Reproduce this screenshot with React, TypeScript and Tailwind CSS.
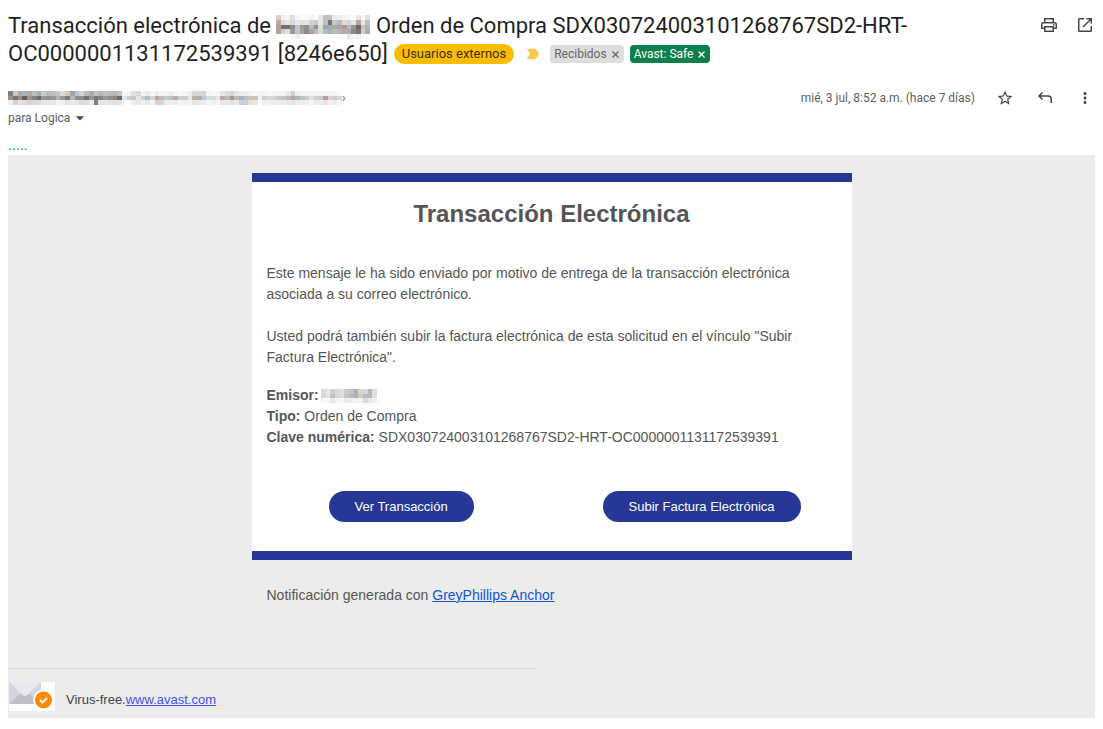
import type { ReactNode } from "react";
import {
  MdMoreVert,
  MdStarBorder,
  MdLabelImportant,
  MdArrowDropDown,
} from "react-icons/md";

// Censored names are stored as rows of coloured cells
const subjectCells = [
  "d8d0c8 f0f0f0 eef4fa dbe2ea f5f5f5 fafafa f8f8f8 f4f4f4 fffdf0 e8e8ec cbbdb5 b9c4c4 e8ecee e8f0f8 f4f4f4 f4f4f4 ffffff e8e4e8 fffce8 dce2ec",
  "b8aca0 dcdcdc e4e4e8 d8d8d8 dfe9f3 e6e0d8 e4e4e4 d4d0cc c4ccd4 e8e8e4 b8c0c4 6f7474 c8c8c0 b4bcc8 e4d8d0 d0d4dc e8e4e4 b0a8a8 e8e8d8 b8c0cc",
  "b4a498 75706c 74706c 8c8c90 bcc4cc a49890 8c9094 c4b8b0 8c94a0 d4e0d0 98a4b0 a0acb0 9cb0a8 a8a4ac b4988c b0b8c4 9c9490 706464 c8c8b8 a8b4c4",
  "b4a498 d0d0d0 e0dcd8 9c9894 c0c4cc a8a4a0 8c8c8c a8a4a0 b4bcc4 d0e0d0 b0bcc4 a8b0b0 b4c0b8 b8b4b8 c0a898 a8acb8 8c8888 807480 dccec4 a4b0c0",
  "ffffff ffffff ffffff f8f8f8 eeeeee f8f8f8 ffffff ffffff ffffff ffffff ffffff ffffff ffffff ffffff ffffff e8e8e8 f4f4f4 f0f0f4 ffffff ffffff",
];

const senderCells = [
  "8a7c70 c0c8cc b0a8a4 a8b4bc b8a898 b8c0bc a8b0b4 c8ccc8 b8bcbc bcc0bc c8c8c8 dcdcdc d8c8bc a0a4a8 b8c4d0 d4d4d0 c0bcb8 a8b0b0 c8c0bc b4b8bc c4bcc0 b8bcbc bcb4b0 c0c4c8",
  "a09084 7c706c 94908c 705c5c a09484 7c8488 6c6c70 94989c 8c908c 989894 b0b4b4 989898 7c7c7c b4b8b8 948c88 8c8c90 6c7480 8c9894 7c7474 888484 a0988c 8c8c94 948478 6c6c70",
  "f0f0f4 d8d0cc e4e0e0 e0dcdc d0d4dc d8dce0 dcdce0 e4e8e4 e8e8e8 e4e8e8 f4f4f4 eeeeee e4e4e4 e8eaf0 e8e4e0 d8dce4 dce0e4 e8ece8 807c88 e8e4e4 e8e4e8 e4e4e8 e0dce0 e4e4e4",
];

const addressCells = [
  "f4fafe f4f4f4 e4e0e0 d8d8d8 f4f4f4 e8ecec f4f4f4 f0e8e4 f4f4f4 f0f4f8 ececec f4f4f4 f8f8f8 f4f4f4 eceedc d0d8e0 dcd4d0 d4d8d8 f4f4f4 f8f8f8 f4f4f4 e4e4e8 d8dcdc d8d4d4 e8e4e0 e8ecf0 f0ece8 f4f4f4 f8f8f8 f4f4f4 f4f4f4 f8f8f8 f4f4f4 f4f4f4 f4f4f4 e8e8ec d8ccc8 f0f0f0 f4f4f4 f4f4f4 f4f4f4 f4f4f4 f4f4f4 f4f4f4 f4f4f4 f4f4f4 fafafa",
  "d8e8f8 d0cccc c8c8cc e8e4e8 ccd0d4 b4c0bc d4d4d8 c4a498 c4bcb4 b8ccd8 d4bca8 a8b4bc d0d0d4 ccccd0 e8eadc b8b0ac b4acb0 c4c8d0 d0dce4 d4dcd8 e8e8ec b4acac c4b8b4 a89890 c0b8b4 b0b0b8 b0c4d4 d4c4ac c4c4c8 f0f4f8 d0d0d4 d8d8dc d4d4d4 c8c8cc c4c4c8 b8bcc0 b8a8a0 a8b8c0 b8c4c8 c8ccd0 f0dccc ccd0d4 c8ccd0 b8a098 d4d4d8 c8d0d4 d8d8dc",
  "fafafa f8f8f8 ececec e8e8e8 f0f0f0 e8e8e8 f4f4f4 d8d0d4 c8d8e0 e8ecf4 f0f0f4 ececec f4f4f4 f0f0f0 f4f4e8 e4e4e8 e8e8e8 e8ecf0 f4f4f8 f0f0f0 f4f4f4 e8e8e8 e8e8ec e4e0e0 e8e8e8 c8d0dc c4d0e0 ecdccc e8e8e8 fafafa f0f0f0 f0f0f0 ececec ececec ececec e8e8ec e4e4e4 e8ecf0 ececec f0f0f0 f4f4f0 ececec ececec e8e4e4 f0f0f0 ececec f8f8f8",
];

const issuerCells = [
  "dcdcd8 f0e8dc c8d0d8 d8dcdc e0e0e4 d0ccc4 c8c0b8 a8b0b8 d4d4d8 d8d4dc b8b8b8 dce0d8",
  "d8d4d0 ece4d8 b8c4cc d0d8d8 dcdce0 c4c4c0 c0b8b0 a8b4bc d8c8c4 b8b8cc b4bab4 dce2d8",
  "f8f8f8 fcfaf8 e8e8f0 f4f4f4 f8f8f8 ececec f0f0f0 f0f0f4 f8f0f0 d8d8e4 e8e8ec f0f4f0",
];

function Mosaic({ rows, className }: { rows: string[]; className: string }) {
  const cells = rows.map((r) => r.split(" "));

  return (
    <svg
      className={className}
      viewBox={`0 0 ${cells[0].length} ${cells.length}`}
      preserveAspectRatio="none"
      shapeRendering="crispEdges"
      aria-hidden="true"
    >
      {cells.map((row, y) =>
        row.map((c, x) => (
          <rect key={`${x}-${y}`} x={x} y={y} width="1" height="1" fill={`#${c}`} />
        ))
      )}
    </svg>
  );
}

function IconButton({ label, children }: { label: string; children: ReactNode }) {
  return (
    <button
      aria-label={label}
      className="flex h-5 w-5 cursor-pointer items-center justify-center text-[#444746]"
    >
      {children}
    </button>
  );
}

// 20px outline icons, 1.5px strokes
function LineIcon({ children }: { children: ReactNode }) {
  return (
    <svg
      width="20"
      height="20"
      viewBox="0 0 20 20"
      fill="none"
      stroke="currentColor"
      strokeWidth="1.500"
    >
      {children}
    </svg>
  );
}

function PrintIcon() {
  return (
    <LineIcon>
      <path d="M5.750 7V3.750h8.500V7" />
      <path d="M5.500 13.250H2.750V9.250q0-1.500 1.500-1.500h11.500q1.500 0 1.500 1.500v4H14.500" />
      <path d="M5.750 11.750h8.500v4.500h-8.500z" />
      <path d="M14 9.750h1.500" />
    </LineIcon>
  );
}

function NewWindowIcon() {
  return (
    <LineIcon>
      <path d="M9 3.750H4.500q-.75 0-.75.75v11q0 .75.75.75h11q.75 0 .75-.75V11" />
      <path d="M11.500 3.750h4.750V8.500M16 4L8 12" />
    </LineIcon>
  );
}

function ReplyIcon() {
  return (
    <LineIcon>
      <path d="M7.500 4.500L4 8l3.500 3.500M4 8h9q3.250 0 3.250 3.250V15" />
    </LineIcon>
  );
}

function Tag({ name, className }: { name: string; className: string }) {
  return (
    <span className={`flex h-[18px] items-center gap-1 rounded px-1 ${className}`}>
      {name}
      <button aria-label={`Quitar ${name}`} className="cursor-pointer">
        <svg width="9" height="9" viewBox="0 0 9 9" stroke="currentColor" strokeWidth="1.300">
          <path d="M1.500 1.500l6 6M7.500 1.500l-6 6" />
        </svg>
      </button>
    </span>
  );
}

function Subject() {
  return (
    <div className="flex items-start justify-between">
      <div className="max-w-[920px] text-[22px] leading-7 text-[#1f1f1f]">
        <h1 className="inline">
          Transacción electrónica de{" "}
          <Mosaic rows={subjectCells} className="inline-block h-6 w-[94px] align-middle" />{" "}
          Orden de Compra SDX030724003101268767SD2-HRT-OC0000001131172539391 [8246e650]
        </h1>
        <div className="ml-1.5 inline-flex h-7 items-center align-bottom text-xs">
          <span className="flex h-5 items-center rounded-full bg-[#fbbc04] px-2 text-[13px] text-[#3c3000]">
            Usuarios externos
          </span>
          <MdLabelImportant className="ml-2.5 h-[18px] w-[18px] text-[#f7cb4d]" />
          <Tag className="ml-2 bg-[#ddd] text-[#666]" name="Recibidos" />
          <Tag className="ml-1.5 bg-[#0b804b] text-white" name="Avast: Safe" />
        </div>
      </div>
      <div className="flex gap-4 pt-[3px]">
        <IconButton label="Imprimir todo">
          <PrintIcon />
        </IconButton>
        <IconButton label="En ventana nueva">
          <NewWindowIcon />
        </IconButton>
      </div>
    </div>
  );
}

function Sender() {
  return (
    <div className="mt-5 flex items-start justify-between text-xs leading-5 text-[#5e5e5e]">
      <div>
        <div className="flex h-5 items-center">
          <Mosaic rows={senderCells} className="h-3.5 w-[114px]" />
          <Mosaic rows={addressCells} className="h-3.5 w-[220px]" />
          <span>›</span>
        </div>
        <button className="flex cursor-pointer items-center">
          para Logica <MdArrowDropDown size={20} className="text-[#444746]" />
        </button>
      </div>
      <div className="flex items-center gap-5">
        <span>mié, 3 jul, 8:52 a.m. (hace 7 días)</span>
        <IconButton label="Destacar">
          <MdStarBorder size={18} />
        </IconButton>
        <IconButton label="Responder">
          <ReplyIcon />
        </IconButton>
        <IconButton label="Más">
          <MdMoreVert size={18} />
        </IconButton>
      </div>
    </div>
  );
}

function PillButton({ children }: { children: ReactNode }) {
  return (
    <button className="h-[31px] cursor-pointer rounded-full bg-[#263796] px-[26px] text-[13px] text-white">
      {children}
    </button>
  );
}

function Card() {
  return (
    <div className="mx-auto w-full max-w-[600px]">
      <div className="border-y-[9px] border-[#263796] bg-white px-[15px] pt-4 pb-[29px]">
        <h2 className="text-center text-2xl font-bold">Transacción Electrónica</h2>
        <p className="mt-[33px]">
          Este mensaje le ha sido enviado por motivo de entrega de la transacción
          electrónica asociada a su correo electrónico.
        </p>
        <p className="mt-[21px]">
          Usted podrá también subir la factura electrónica de esta solicitud en el
          vínculo "Subir Factura Electrónica".
        </p>
        <div className="mt-[17px]">
          <div className="flex items-center">
            <b>Emisor:</b>
            <Mosaic rows={issuerCells} className="ml-0.5 h-3.5 w-14" />
          </div>
          <div>
            <b>Tipo:</b> Orden de Compra
          </div>
          <div>
            <b>Clave numérica:</b> SDX030724003101268767SD2-HRT-OC0000001131172539391
          </div>
        </div>
        <div className="mt-[43px] flex justify-between pr-9 pl-[62px]">
          <PillButton>Ver Transacción</PillButton>
          <PillButton>Subir Factura Electrónica</PillButton>
        </div>
      </div>
      <p className="mt-[25px] px-[15px]">
        Notificación generada con{" "}
        <a href="#" className="text-[#1155cc] underline">
          GreyPhillips Anchor
        </a>
      </p>
    </div>
  );
}

function AvastLogo() {
  return (
    <svg width="46" height="29" viewBox="0 0 46 29" aria-hidden="true">
      <path fill="#fff" d="M0 0h46v29H0z" />
      <path fill="#d5d5df" d="M0 0h32v22H0z" />
      <path fill="#bfbfca" d="M0 22l11-10h10l11 10z" />
      <path fill="#e8e8f1" d="M0 0h32L18 13.300q-2 1.500-4 0z" />
      <circle cx="34.500" cy="18" r="10.500" fill="#fff" />
      <circle cx="34.500" cy="18" r="8.500" fill="#ff8a00" />
      <path d="M31 18l2.500 2.500 4.500-4.500" fill="none" stroke="#fff" strokeWidth="1.800" />
    </svg>
  );
}

export default function App() {
  return (
    <main className="bg-white px-2 pt-3 pb-[11px] font-[Roboto,sans-serif]">
      <Subject />
      <Sender />
      <div className="mt-2 h-[19px] font-['Liberation_Sans',Arial,sans-serif] text-sm leading-[18px] text-[#1188cc]">
        .....
      </div>
      <section className="bg-[#ececec] pt-[18px] pb-[7px] font-['Liberation_Sans',Arial,sans-serif] text-sm leading-[21px] text-[#555]">
        <Card />
        <div className="mt-[62px] w-full max-w-[529px] border-t border-[#d3d4de] pt-[13px]">
          <div className="flex items-center gap-[11px] pl-px text-[13px] text-[#41424e]">
            <AvastLogo />
            <span className="pt-1.5">
              Virus-free.
              <a href="#" className="text-[#4453ea] underline">
                www.avast.com
              </a>
            </span>
          </div>
        </div>
      </section>
    </main>
  );
}
